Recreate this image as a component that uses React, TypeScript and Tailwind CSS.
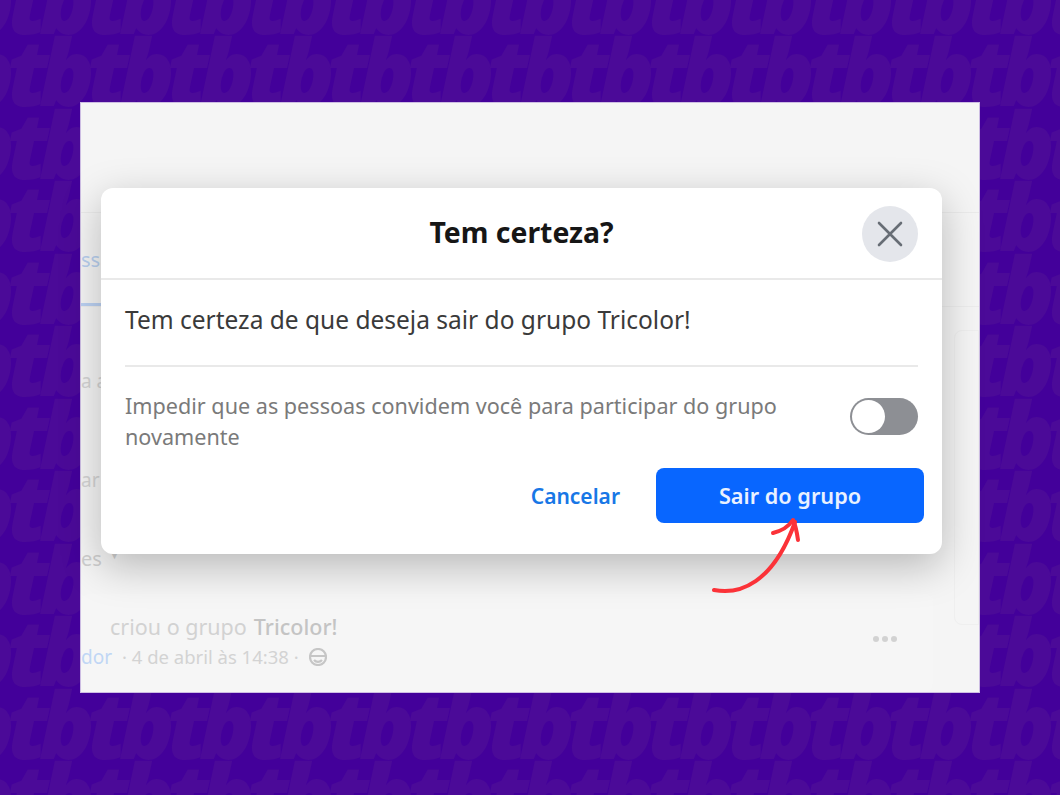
const font = { fontFamily: '"Noto Sans", sans-serif' }

function Pattern() {
  const rows = Array.from({ length: 12 })
  return (
    <div className="absolute inset-0 overflow-hidden select-none">
      <div className="-ml-[73px] -mt-[38px] flex flex-col">
        {rows.map((_, r) => (
          <div key={r} className="flex h-[72.5px] items-center">
            {Array.from({ length: 15 }).map((_, c) => (
              <span
                key={c}
                className="w-[80px] shrink-0 whitespace-nowrap font-['Open_Sans',sans-serif] text-[92px] font-extrabold italic leading-[73px] tracking-[-10px] text-[#4b0a98]"
              >
                tb
              </span>
            ))}
          </div>
        ))}
      </div>
    </div>
  )
}

function Smiley() {
  return (
    <svg width="18" height="18" viewBox="0 0 18 18" fill="none" stroke="#c6c6c6" strokeWidth="2.2">
      <circle cx="9" cy="9" r="8" />
      <path d="M2 8 H16 M5 12 C7 14.5 11 14.5 13 12" />
    </svg>
  )
}

function BackPage() {
  return (
    <div className="relative z-0 mx-[80px] mt-[102px] h-[591px] overflow-hidden bg-[#f5f5f5] font-['Noto_Sans',sans-serif] shadow-[inset_0_0_0_1px_#cdbde3]">
      <div className="absolute left-[1px] right-[1px] top-[110px] border-t border-[#ebebeb]" />
      <div className="absolute left-[1px] right-[1px] top-[204px] border-t border-[#ededed]" />
      <div className="absolute left-[1px] top-[143px] text-[20px] text-[#b9d0f0]">ssa</div>
      <div className="absolute left-[1px] top-[201px] h-[3px] w-[40px] bg-[#bcd2f3]" />
      <div className="absolute left-[1px] top-[265px] text-[19px] text-[#d4d4d4]">a a</div>
      <div className="absolute left-[1px] top-[364px] text-[19px] text-[#d4d4d4]">ar</div>
      <div className="absolute left-[1px] top-[442px] flex items-center gap-[8px] text-[20px] text-[#cfcfcf]">
        es
        <span className="mt-[-6px] text-[9px]">▼</span>
      </div>

      <div className="absolute right-[1px] top-[228px] h-[295px] w-[25px] rounded-l-lg border border-[#efefef]" />

      <div className="absolute left-[1px] top-[492px] h-[98px] w-[852px] rounded-lg bg-[#f6f6f6]">
        <div className="absolute left-[29px] top-[17px] flex items-center text-[21.5px] text-[#d2d2d2]">
          criou o grupo <span className="ml-[7px] font-medium text-[#c4c4c4]">Tricolor!</span>
        </div>
        <div className="absolute left-0 top-[49px] flex items-center text-[18.5px] text-[#d3d3d3]">
          <span className="text-[19px] text-[#c0d6f5]">dor</span>
          <span className="ml-[10px]">· 4 de abril às 14:38 ·</span>
          <span className="ml-[10px] flex">
            <Smiley />
          </span>
        </div>
        <div className="absolute left-[792px] top-[42px] flex gap-[3px]">
          <span className="h-[6px] w-[6px] rounded-full bg-[#d2d2d2]" />
          <span className="h-[6px] w-[6px] rounded-full bg-[#d2d2d2]" />
          <span className="h-[6px] w-[6px] rounded-full bg-[#d2d2d2]" />
        </div>
      </div>
    </div>
  )
}

function Dialog() {
  return (
    <div
      style={font}
      className="absolute left-[101px] top-[188px] z-10 w-[841px] rounded-[12px] bg-white shadow-[0_12px_40px_rgba(0,0,0,0.25)]"
    >
      <div className="relative flex h-[92px] items-center justify-center border-b-2 border-[#e9e9e9] pb-[2px]">
        <h2 className="text-[28.4px] font-bold text-[#161616]">Tem certeza?</h2>
        <button className="absolute right-[24px] top-[18px] flex h-[56px] w-[56px] items-center justify-center rounded-full bg-[#e4e6eb]">
          <svg width="26" height="26" viewBox="0 0 26 26" fill="none" stroke="#676d75" strokeWidth="2.6" strokeLinecap="round">
            <path d="M2 2 L24 24 M24 2 L2 24" />
          </svg>
        </button>
      </div>
      <div className="px-[24px]">
        <p className="flex h-[87px] items-center border-b-2 border-[#e9e9e9] pb-[4px] text-[24.5px] text-[#3a3a3a]">
          Tem certeza de que deseja sair do grupo Tricolor!
        </p>
        <div className="mt-[23px] flex items-start justify-between">
          <p className="w-[690px] text-[21.6px] leading-[31px] text-[#7a7a7a]">
            Impedir que as pessoas convidem você para participar do grupo novamente
          </p>
          <div className="mt-[8px] flex h-[37px] w-[68px] items-center rounded-full bg-[#8d8f94] p-[2px]">
            <span className="h-[33px] w-[33px] rounded-full bg-white" />
          </div>
        </div>
      </div>
      <div className="mt-[16px] flex items-center justify-end pb-[31px] pr-[18px]">
        <button className="mr-[36px] pt-[2px] text-[21px] font-semibold text-[#1877e6]">Cancelar</button>
        <button className="h-[55px] w-[268px] rounded-[8px] bg-[#0866ff] pt-[2px] text-[21.7px] font-semibold text-[#e9f1ff]">
          Sair do grupo
        </button>
      </div>
    </div>
  )
}

export default function App() {
  return (
    <div className="relative h-[795px] w-[1060px] overflow-hidden bg-[#43009a]">
      <Pattern />
      <BackPage />
      <Dialog />
      <svg className="absolute left-[705px] top-[512px] z-20" width="105" height="90" viewBox="0 0 105 90" fill="none">
        <path d="M9 78 C34 83 68 72 90 10" stroke="#fb3238" strokeWidth="4" strokeLinecap="round" />
        <path d="M68 21 C76 19 84 14 88 8 C91 14 92 21 93 28" stroke="#fb3238" strokeWidth="4" strokeLinecap="round" strokeLinejoin="round" />
      </svg>
    </div>
  )
}
